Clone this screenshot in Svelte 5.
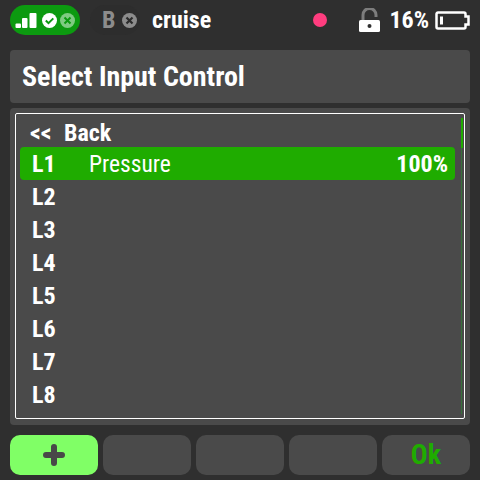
<script>
  const rows = [
    { id: 'L1', name: 'Pressure', value: '100%', active: true },
    { id: 'L2' },
    { id: 'L3' },
    { id: 'L4' },
    { id: 'L5' },
    { id: 'L6' },
    { id: 'L7' },
    { id: 'L8' }
  ];
</script>

<div class="screen">
  <header class="topbar">
    <div class="link-pill">
      <svg width="22" height="15" viewBox="0 0 22 15">
        <rect x="0.5" y="10.500" width="5.500" height="4.500" rx="1" fill="#fff" />
        <rect x="7" y="5" width="5.500" height="10" rx="1" fill="#fff" />
        <rect x="14.500" y="0" width="7" height="15" rx="1" fill="#fff" />
      </svg>
      <svg class="status" width="15" height="15" viewBox="0 0 15 15">
        <circle cx="7.500" cy="7.500" r="7.500" fill="#fff" />
        <path d="M3.800 7.500l2.700 2.700 4.800-4.800" fill="none" stroke="#0c9a10" stroke-width="2" />
      </svg>
      <svg class="status second" width="15" height="15" viewBox="0 0 15 15">
        <circle cx="7.500" cy="7.500" r="7.500" fill="#7fcb82" />
        <path d="M4.500 4.500l6 6M10.500 4.500l-6 6" stroke="#0c9a10" stroke-width="2" />
      </svg>
    </div>
    <div class="module">
      <span class="letter">B</span>
      <svg width="15" height="15" viewBox="0 0 15 15">
        <circle cx="7.500" cy="7.500" r="7.500" fill="#8c8c8c" />
        <path d="M4.500 4.500l6 6M10.500 4.500l-6 6" stroke="#2b2b2b" stroke-width="2.200" />
      </svg>
    </div>
    <span class="model">cruise</span>
    <span class="dot"></span>
    <svg class="lock" width="21" height="25" viewBox="0 0 21 25">
      <path d="M4 13V7a6.200 6.200 0 0 1 13 0v2" fill="none" stroke="#7d7d7d" stroke-width="3" />
      <rect x="0" y="12" width="21" height="12" rx="1.500" fill="#fff" />
      <circle cx="10.500" cy="18" r="2" fill="#2f2f2f" />
    </svg>
    <span class="percent">16%</span>
    <svg class="battery" width="35" height="19" viewBox="0 0 35 19">
      <path d="M3 1.500h26a1.500 1.500 0 0 1 1.500 1.500v2.500h3v8h-3V16a1.500 1.500 0 0 1-1.500 1.500H3A1.500 1.500 0 0 1 1.500 16V3A1.500 1.500 0 0 1 3 1.500z" fill="none" stroke="#fff" stroke-width="2.500" />
      <rect x="5" y="5.500" width="3" height="8" fill="#fff" />
    </svg>
  </header>

  <div class="title">Select Input Control</div>

  <section class="panel">
    <div class="frame">
      <div class="row back">
        <span class="chev">&lt;&lt;</span>
        <span>Back</span>
      </div>
      {#each rows as row}
        <div class="row" class:active={row.active}>
          <span class="id">{row.id}</span>
          {#if row.name}
            <span class="name">{row.name}</span>
            <span class="value">{row.value}</span>
          {/if}
        </div>
      {/each}
      <div class="scrollbar"><div class="thumb"></div></div>
    </div>
  </section>

  <footer class="buttons">
    <button class="btn plus" aria-label="Add">
      <svg width="22" height="22" viewBox="0 0 22 22">
        <path d="M11 3v16M3 11h16" stroke="#484848" stroke-width="6" stroke-linecap="round" />
      </svg>
    </button>
    <button class="btn" aria-label="Empty"></button>
    <button class="btn" aria-label="Empty"></button>
    <button class="btn" aria-label="Empty"></button>
    <button class="btn ok">Ok</button>
  </footer>
</div>

<style>
  :global(body) {
    margin: 0;
    background: #2f2f2f;
  }

  .screen {
    width: 480px;
    height: 480px;
    box-sizing: border-box;
    background: #2f2f2f;
    color: #fff;
    font-family: Roboto, "Liberation Sans", sans-serif;
    font-stretch: 75%;
    font-weight: 700;
    overflow: hidden;
  }

  .topbar {
    height: 40px;
    display: flex;
    align-items: center;
    padding: 0 10px;
    margin-bottom: 10px;
  }

  .link-pill {
    width: 70px;
    height: 30px;
    box-sizing: border-box;
    padding-left: 5px;
    display: flex;
    align-items: center;
    background: #0c9a10;
    border-radius: 15px;
  }

  .link-pill svg {
    flex: none;
  }

  .link-pill .status {
    margin-left: 5px;
    margin-top: 1px;
  }

  .link-pill .second {
    margin-left: 3px;
  }

  .module {
    width: 50px;
    margin-left: 10px;
    padding-left: 12px;
    display: flex;
    align-items: center;
    gap: 7px;
    height: 30px;
    background: #2d2d2d;
    border-radius: 15px;
    box-sizing: border-box;
    margin-right: 12px;
  }

  .letter {
    font-size: 24px;
    color: #8c8c8c;
  }

  .model {
    font-size: 24px;
    flex: 1;
  }

  .dot {
    width: 14px;
    height: 14px;
    border-radius: 50%;
    background: #ff3d7f;
    margin-right: 32px;
  }

  .lock {
    margin-right: 9px;
  }

  .percent {
    font-size: 24px;
    margin-right: 6px;
  }

  .title {
    height: 53px;
    margin: 0 10px 5px;
    padding-left: 12px;
    display: flex;
    align-items: center;
    background: #4a4a4a;
    border-radius: 4px;
    font-size: 28px;
  }

  .panel {
    height: 317px;
    margin: 0 10px 10px;
    padding: 5px 5px 6px;
    box-sizing: border-box;
    background: #4a4a4a;
    border-radius: 4px;
  }

  .frame {
    position: relative;
    height: 100%;
    box-sizing: border-box;
    border: 1px solid #fff;
    border-radius: 2px;
    padding: 1px 9px 0 4px;
  }

  .row {
    height: 33px;
    box-sizing: border-box;
    padding: 1px 8px 0 12px;
    display: flex;
    align-items: center;
    border-radius: 4px;
    font-size: 24px;
  }

  .back {
    height: 32px;
    padding: 3px 8px 0 10px;
  }

  .chev {
    width: 34px;
  }

  .active {
    background: #1fac00;
  }

  .id {
    width: 57px;
  }

  .name {
    flex: 1;
    font-weight: 400;
    font-size: 23.500px;
  }

  .value {
    margin-right: -1px;
  }

  .scrollbar {
    position: absolute;
    top: 4px;
    bottom: 4px;
    right: 2px;
    width: 1px;
    background: #35713a;
  }

  .thumb {
    height: 30px;
    width: 2px;
    background: #1fac00;
  }

  .buttons {
    display: grid;
    grid-template-columns: repeat(5, 88px);
    gap: 5px;
    padding: 0 10px;
  }

  .btn {
    height: 40px;
    padding: 0;
    border: 0;
    border-radius: 10px;
    background: #4a4a4a;
    font: inherit;
    display: flex;
    align-items: center;
    justify-content: center;
  }

  .plus {
    background: #80ff66;
  }

  .ok {
    color: #1fac00;
    font-size: 28px;
    padding-bottom: 2px;
  }
</style>
